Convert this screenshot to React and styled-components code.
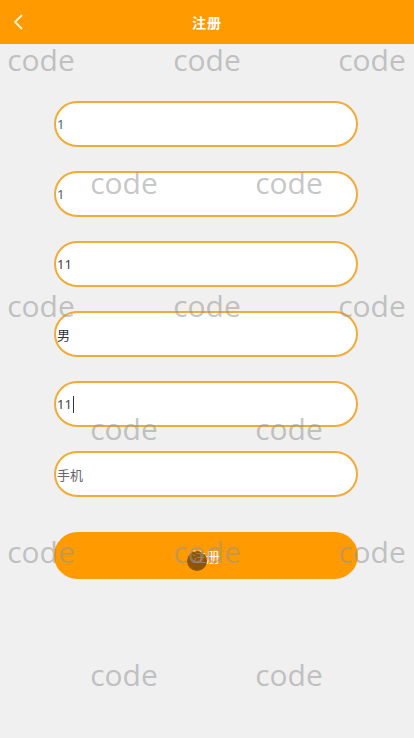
import React from 'react'
import styled, { createGlobalStyle } from 'styled-components'

const GlobalStyle = createGlobalStyle`
  html, body {
    margin: 0;
    padding: 0;
    background: #f0f0f0;
    font-family: "Noto Sans", "Noto Sans CJK SC", sans-serif;
  }
`

const Page = styled.div`
  position: relative;
  width: 414px;
  height: 738px;
  overflow: hidden;
  background: #f0f0f0;
`

const Header = styled.div`
  height: 44px;
  background: #ff9a00;
  display: flex;
  align-items: center;
  justify-content: center;
  position: relative;
`

const Back = styled.div`
  position: absolute;
  left: 12px;
  top: 13px;
  width: 14px;
  height: 18px;
  display: flex;
`

const Title = styled.div`
  color: #fff;
  font-size: 14px;
  font-weight: 700;
  font-family: "Noto Sans CJK SC", sans-serif;
  letter-spacing: 1px;
`

const Form = styled.div`
  display: flex;
  flex-direction: column;
  align-items: flex-start;
  padding: 57px 0 0 54px;
  gap: 24px;
`

const Field = styled.div`
  box-sizing: border-box;
  width: 304px;
  height: 46px;
  border: 2px solid #f2ab38;
  border-radius: 23px;
  background: #fff;
  display: flex;
  align-items: center;
  padding-left: 1px;
  font-size: 13px;
  color: ${p => p.$color || '#444'};
  font-family: "Noto Sans", "Noto Sans CJK SC", sans-serif;
`

const Caret = styled.span`
  display: inline-block;
  width: 1px;
  height: 17px;
  background: #333;
  margin-left: 1px;
`

const Button = styled.div`
  box-sizing: border-box;
  width: 304px;
  height: 47px;
  margin-top: 11px;
  border-radius: 24px;
  background: #ff9a00;
  color: #fff;
  display: flex;
  align-items: center;
  justify-content: center;
  font-size: 14px;
  font-family: "Noto Sans CJK SC", sans-serif;
`

const Touch = styled.div`
  position: absolute;
  left: 187px;
  top: 551px;
  width: 20px;
  height: 20px;
  border-radius: 50%;
  background: rgba(70, 40, 0, 0.6);
`

const Watermark = styled.div`
  position: absolute;
  transform: translate(-50%, -50%);
  font-family: "Open Sans", sans-serif;
  font-size: 30px;
  color: rgba(150, 150, 150, 0.55);
  pointer-events: none;
  line-height: 1;
`

const marks = []
for (let r = 0; r < 6; r++) {
  const y = 60 + r * 123
  const xs = r % 2 === 0 ? [41, 207, 372] : [124, 289]
  xs.forEach(x => marks.push({ x, y }))
}

const fields = [
  { text: '1', color: '#3f6a6a' },
  { text: '1', color: '#3f6a6a' },
  { text: '11', color: '#444' },
  { text: '男', color: '#333' },
  { text: '11', color: '#444', caret: true },
  { text: '手机', color: '#666' }
]

const App = () => {
  return (
    <Page>
      <GlobalStyle />
      <Header>
        <Back>
          <svg width="14" height="18" viewBox="0 0 14 18">
            <polyline points="10,2 3,9 10,16" fill="none" stroke="#fff4d0" strokeWidth="1.8" />
          </svg>
        </Back>
        <Title>注册</Title>
      </Header>
      <Form>
        {fields.map((f, i) => (
          <Field key={i} $color={f.color}>
            {f.text}
            {f.caret && <Caret />}
          </Field>
        ))}
        <Button>注册</Button>
      </Form>
      <Touch />
      {marks.map((m, i) => (
        <Watermark key={i} style={{ left: m.x, top: m.y }}>code</Watermark>
      ))}
    </Page>
  )
}

export default App
